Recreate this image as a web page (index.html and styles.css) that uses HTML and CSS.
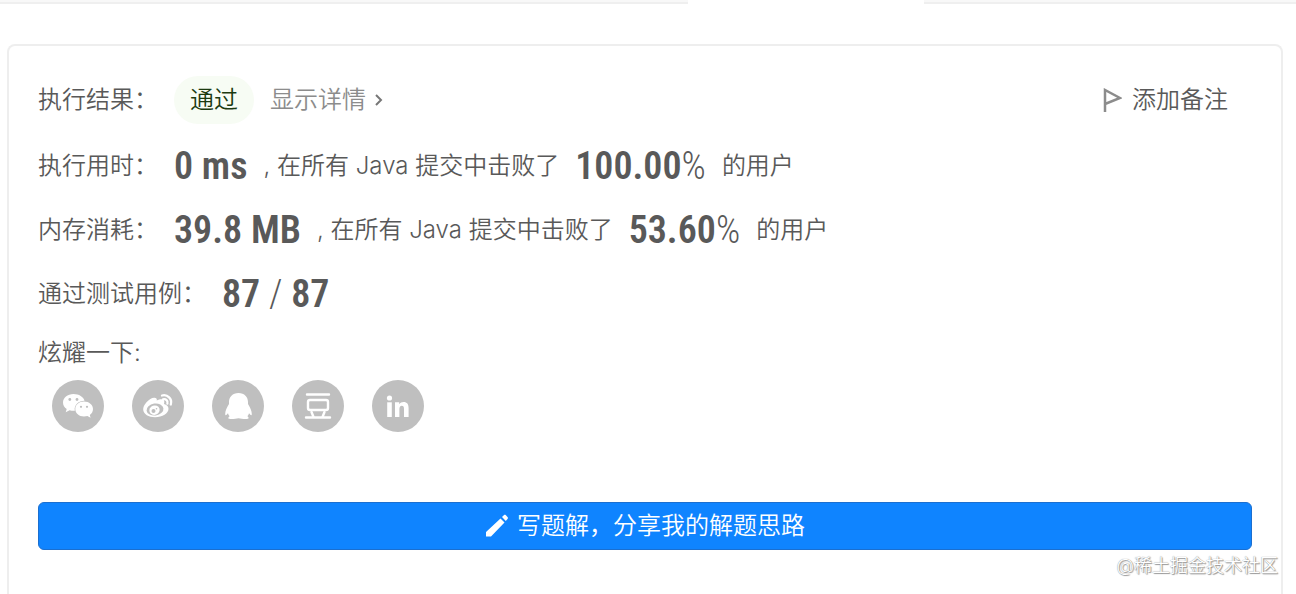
FILE: index.html
```html
<!DOCTYPE html>
<html lang="zh-CN">
<head>
  <meta charset="UTF-8">
  <title>执行结果</title>
  <link rel="stylesheet" href="styles.css">
</head>
<body>
  <div class="tabs">
    <div class="tab-before"></div>
    <div class="tab-active"></div>
    <div class="tab-after"></div>
  </div>

  <main class="result">
    <div class="row status">
      <span class="label">执行结果：</span>
      <span class="badge">通过</span>
      <a class="detail" href="#">显示详情
        <svg width="10" height="14" viewBox="0 0 10 14"><path d="M2 2l5 5-5 5" fill="none" stroke="#777" stroke-width="2"/></svg>
      </a>
      <button class="note" type="button">
        <svg width="20" height="24" viewBox="0 0 20 24"><path d="M3 24V2l15 8L3 16" fill="none" stroke="#8c8c8c" stroke-width="2.500"/></svg>
        添加备注
      </button>
    </div>

    <div class="row">
      <span class="label">执行用时：</span>
      <span class="number">0 ms</span>
      <span>, 在所有 Java 提交中击败了</span>
      <span class="number">100.00<span class="thin">%</span></span>
      <span>的用户</span>
    </div>

    <div class="row">
      <span class="label">内存消耗：</span>
      <span class="number">39.8 MB</span>
      <span>, 在所有 Java 提交中击败了</span>
      <span class="number">53.60<span class="thin">%</span></span>
      <span>的用户</span>
    </div>

    <div class="row">
      <span class="label">通过测试用例：</span>
      <span class="number">87 <span class="thin">/</span> 87</span>
    </div>

    <div class="share-title">炫耀一下:</div>
    <div class="share">
      <a href="#" aria-label="微信">
        <svg viewBox="0 0 52 52">
          <path d="M21.500 14c-6 0-10.500 3.800-10.500 8.500 0 2.700 1.400 4.900 3.700 6.500l-1 3.200 3.900-2c1.600.5 3.300.7 5.200.6-1-6 4-10 9.700-10C31.500 16.800 27 14 21.500 14z" fill="#fff"/>
          <path d="M32 21.600c-5 0-8.700 3.300-8.700 7.400s3.700 7.500 8.700 7.500c1.200 0 2.400-.2 3.400-.5l3.200 1.800-.8-2.800c2-1.400 3.200-3.500 3.200-6 0-4.100-4-7.400-9-7.400z" fill="#fff"/>
          <circle cx="17.800" cy="19.500" r="1.400"/><circle cx="25" cy="19.500" r="1.400"/>
          <circle cx="29" cy="26.800" r="1.100"/><circle cx="35" cy="26.800" r="1.100"/>
        </svg>
      </a>
      <a href="#" aria-label="微博">
        <svg viewBox="0 0 52 52">
          <path d="M23.500 18c-2.200-1.200-6 .8-9 4.200-2.300 2.600-3.500 5-3.300 7.500.3 4.500 5.500 7.500 11.800 7.500 7.500 0 13.500-4 13.500-8.500 0-2.500-1.800-4-4.500-4.700.8-2.500.2-4.300-1.700-4.700-1.500-.3-3.500.2-5.600 1.100.4-1.200-.1-2-1.200-2.400z" fill="#fff"/>
          <ellipse cx="23" cy="29.500" rx="8.500" ry="6" transform="rotate(-8 23 29.500)"/>
          <ellipse cx="22.500" cy="30.200" rx="5.200" ry="4.700" transform="rotate(-20 22.500 30.200)" fill="#fff"/>
          <circle cx="21.500" cy="31" r="2"/><circle cx="24.500" cy="28.800" r=".8"/>
          <path d="M30 15.500c5.500-1.500 10.500 3.500 8.800 9M31 19.300c2.800-.7 5.300 1.500 4.400 4.300" fill="none" stroke="#fff" stroke-width="2.300" stroke-linecap="round"/>
        </svg>
      </a>
      <a href="#" aria-label="QQ">
        <svg viewBox="0 0 52 52">
          <path d="M26.500 13c-6 0-9.500 4-9.500 9v2c-2 3.200-3.800 6.800-3.800 10 0 1.700.8 1.700 2.800-.7.3 1.200.8 2.200 1.700 3-1.600.7-1.900 2.700.3 2.700 3 .1 6.200-.1 8.500-.7 2.300.6 5.500.8 8.500.7 2.200 0 1.900-2 .3-2.700.9-.8 1.400-1.800 1.700-3 2 2.400 2.800 2.400 2.800.7 0-3.200-1.800-6.800-3.800-10v-2c0-5-3.500-9-9.500-9z" fill="#fff"/>
        </svg>
      </a>
      <a href="#" aria-label="豆瓣">
        <svg viewBox="0 0 52 52">
          <g fill="none" stroke="#fff" stroke-width="2.400" stroke-linecap="round">
            <path d="M15 14.500h22M14 37.500h24M19.500 32l2 5M32.500 32l-2 5"/>
            <rect x="16" y="20" width="20" height="10" rx="2"/>
          </g>
        </svg>
      </a>
      <a href="#" aria-label="LinkedIn">
        <svg viewBox="0 0 52 52">
          <g fill="#fff">
            <circle cx="17.500" cy="18" r="2.600"/>
            <path d="M15.200 22.300h4.600V37h-4.600z"/>
            <path d="M23 22.300h4.200v2c1-1.500 2.400-2.300 4.400-2.300 3.500 0 5 2.200 5 6v9H32v-8c0-2-.6-3.200-2.200-3.200-1.700 0-2.400 1.300-2.400 3.200v8H23z"/>
          </g>
        </svg>
      </a>
    </div>

    <button class="write" type="button">
      <svg width="24" height="24" viewBox="0 0 24 24"><path d="M1 18L15.500 4.500l4 4L6 22.500H1zM17 3l1.800-1.700c.7-.6 1.500-.6 2.100 0L22.500 3c.6.6.6 1.400 0 2L20.800 7z" fill="#fff"/></svg>
      写题解，分享我的解题思路
    </button>
  </main>

  <div class="watermark">@稀土掘金技术社区</div>
</body>
</html>
```
FILE: styles.css
```css
* {
  box-sizing: border-box;
}

body {
  margin: 0;
  height: 100vh;
  display: flex;
  flex-direction: column;
  position: relative;
  overflow: hidden;
  background: #fff;
  color: #595959;
  font-family: "Inter", "Noto Sans CJK SC", sans-serif;
  font-size: 24px;
  font-weight: 350;
  line-height: 48px;
}

.tabs {
  display: flex;
  height: 4px;
  margin-bottom: 40px;
}

.tab-before,
.tab-after {
  background: #f8f8f8;
  border-bottom: 2px solid #efefef;
}

.tab-before {
  flex: 1;
}

.tab-active {
  width: 236px;
}

.tab-after {
  width: 372px;
}

.result {
  flex: 1;
  margin: 0 13px 0 7px;
  padding: 30px 29px 0;
  border: 2px solid #eee;
  border-bottom: none;
  border-radius: 8px 8px 0 0;
}

.row {
  display: flex;
  align-items: center;
  gap: 16px;
  height: 64px;
  white-space: nowrap;
}

.status {
  height: 48px;
  margin-bottom: 10px;
}

.badge {
  padding: 0 16px;
  border-radius: 24px;
  background: #f7fcf4;
  color: #1c3a10;
}

.detail {
  display: flex;
  align-items: center;
  gap: 8px;
  color: #8c8c8c;
  text-decoration: none;
}

button {
  display: flex;
  align-items: center;
  padding: 0;
  border: none;
  background: none;
  color: inherit;
  font: inherit;
  cursor: pointer;
}

.note {
  gap: 10px;
  margin-left: auto;
  margin-right: 24px;
}

.number {
  font-family: "Roboto Condensed", "Roboto", sans-serif;
  font-size: 38px;
  font-weight: 600;
}

.thin {
  font-weight: 300;
}

.share-title {
  line-height: 54px;
}

.share {
  display: flex;
  gap: 28px;
  margin-left: 14px;
}

.share a {
  width: 52px;
  height: 52px;
  border-radius: 50%;
  background: #bfbfbf;
}

.share svg {
  display: block;
  fill: #bfbfbf;
}

.write {
  justify-content: center;
  gap: 8px;
  width: 100%;
  height: 48px;
  margin-top: 70px;
  border: 1px solid #1b6fd0;
  border-radius: 6px;
  background: #0f84ff;
  color: #fff;
}

.watermark {
  position: absolute;
  right: 18px;
  bottom: 16px;
  color: #fff;
  font-size: 18px;
  line-height: 24px;
  text-shadow: 0 0 1px #777, 1px 1px 1px #999;
}
```
